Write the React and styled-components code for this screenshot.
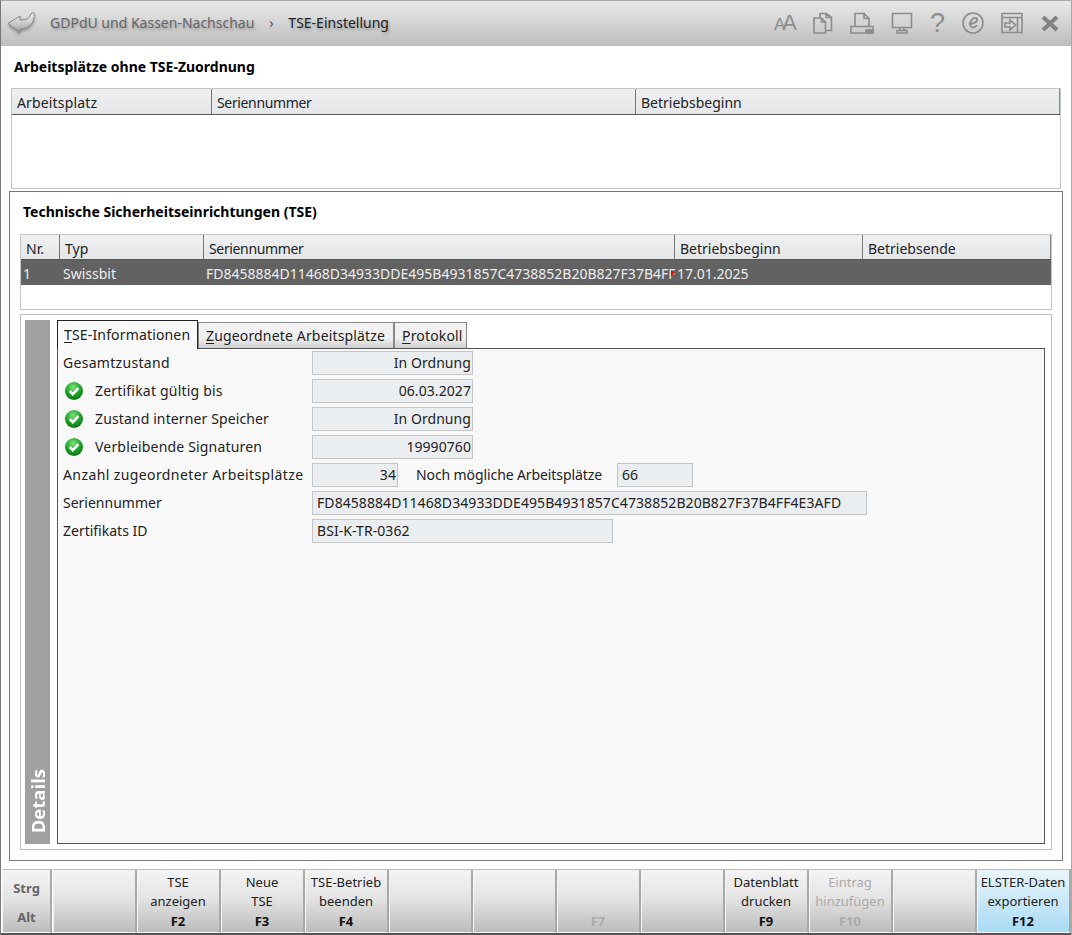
import React from 'react';
import styled, { createGlobalStyle, css } from 'styled-components';

const Global = createGlobalStyle`
  html, body { margin: 0; padding: 0; background: #fff; }
  * { box-sizing: border-box; }
  body { font-family: "Noto Sans", "Open Sans", "Liberation Sans", sans-serif; font-size: 14px; color: #1a1a1a; }
`;
const Window = styled.div`
  width: 1072px; height: 935px; display: flex; flex-direction: column; overflow: hidden;
  background: #fff; border-left: 1px solid #777; border-right: 1px solid #aaa; border-top: 1px solid #aaa;
`;
const Header = styled.header`
  flex: 0 0 45px; display: flex; align-items: center; padding: 0 11px 2px 6px;
  background: linear-gradient(#e8e8e8, #d8d8d8 40%, #bdbdbd);
`;
const Crumb = styled.span`
  font-size: 14px; color: ${p => p.$current ? '#222' : '#666'};
  text-shadow: 1px 2px 3px rgba(0,0,0,.3); white-space: nowrap;
`;
const Chevron = styled.span`
  width: 34px; text-align: center; font-size: 14px; color: #555;
`;
const BackIcon = styled.svg`
  width: 28px; height: 26px; margin-right: 15px; flex: none; filter: drop-shadow(0 2px 1.5px rgba(0,0,0,.3));
`;
const Tools = styled.div`
  margin-left: auto; display: flex; align-items: center; gap: 17px;
`;
const ToolIcon = styled.svg`
  width: ${p => p.$w || 22}px; height: 22px; display: block; flex: none; fill: none; stroke: #8c8c8c; stroke-width: 1.6;
`;
const AaGlyph = styled.span`
  width: 22px; display: flex; align-items: baseline; font-family: "Liberation Sans", sans-serif; font-size: 22px; letter-spacing: -3px; color: #8c8c8c; line-height: 22px; padding-top: 2px;
  small { font-size: 17px; }
`;
const Help = styled.span`
  width: 15px; text-align: center; font-family: "Liberation Sans", sans-serif; font-size: 27px; color: #8c8c8c; line-height: 22px;
`;
const Main = styled.main`
  flex: 1; min-height: 0; display: flex; flex-direction: column; padding: 0 8px 8px;
`;
const TopSection = styled.section`
  flex: 0 0 145px; padding: 0 2px;
`;
const Title = styled.h2`
  margin: 0; font-size: 14px; line-height: 20px; font-weight: 700; color: #000;
  padding: ${p => p.$inner ? '10px 3px 12px' : '11px 3px 11px'};
`;
const Table = styled.div`
  height: ${p => p.$h}px; border: 1px solid #c4c4c4; background: #fff;
`;
const HeadRow = styled.div`
  display: grid; grid-template-columns: ${p => p.$cols}; grid-template-rows: 100%; height: ${p => p.$h || 26}px;
  overflow: hidden;
  border-bottom: 1px solid #555;
  background: linear-gradient(#eef0f2, #e5e6e8);
`;
const HeadCell = styled.div`
  padding: 0 5px; line-height: 27px; font-size: 14px; color: #222; white-space: nowrap;
  letter-spacing: ${p => p.$ls || 0}px;
  border-right: 1px solid #777;
  &:last-child { border-right-color: #888; }
`;
const BodyRow = styled.div`
  display: grid; grid-template-columns: ${p => p.$cols}; grid-template-rows: 100%; height: 25px; background: #626262; color: #eee;
`;
const BodyCell = styled.div`
  position: relative; overflow: hidden; white-space: nowrap; padding: 0 2px 0 ${p => p.$pad || 2}px; line-height: 27px; font-size: 14px;
`;
const Overflow = styled.i`
  position: absolute; right: 0; top: 10px; width: 0; height: 0;
  border-left: 4px solid #f00; border-top: 3px solid transparent; border-bottom: 3px solid transparent;
`;
const Outer = styled.section`
  flex: 1; min-height: 0; display: flex; flex-direction: column; border: 1px solid #777; padding: 0 10px 10px;
`;
const Details = styled.div`
  flex: 1; min-height: 0; margin-top: 4px; border: 1px solid #bbb; padding: 5px 6px 5px 4px; display: flex; gap: 7px;
`;
const SideBar = styled.div`
  flex: 0 0 25px; background: #a0a0a0; display: flex; align-items: flex-end; justify-content: center; padding-bottom: 11px;
`;
const SideText = styled.span`
  writing-mode: vertical-rl; transform: rotate(180deg); color: #fff; font-weight: 700; font-size: 18.5px; line-height: 25px; font-family: "Open Sans", "Noto Sans", sans-serif;
`;
const TabArea = styled.div`
  flex: 1; min-width: 0; display: flex; flex-direction: column;
`;
const TabBar = styled.div`
  flex: 0 0 28px; display: flex; align-items: flex-end; position: relative; z-index: 1; margin-bottom: -1px; padding-bottom: 1px;
`;
const Tab = styled.div`
  width: ${p => p.$w}px; flex: none; height: 26px; line-height: 25px; padding-left: 7px; font-size: 14px; white-space: nowrap; color: #222;
  letter-spacing: .16px;
  border: 1px solid #888; border-bottom: 0;
  background: linear-gradient(#f2f2f2, #f0f0f0 60%, #cfcfcf);
  u { text-underline-offset: 2px; }
  ${p => p.$active && css`
    height: 29px; line-height: 27px; margin: 0 0 -1px 0; padding-left: 6px; border: 1px solid #222; border-bottom: 0; background: #f8f8f8;
  `}
`;
const Panel = styled.div`
  flex: 1; min-height: 0; background: #f8f8f8; border: 1px solid #555; padding: 2px 5px; display: flex; flex-direction: column; gap: 4px;
`;
const Row = styled.div`
  height: 24px; display: flex; align-items: center;
`;
const Label = styled.span`
  width: ${p => p.$w}px; flex: none; font-size: 14px; line-height: 24px; height: 24px; color: #222; white-space: nowrap;
  letter-spacing: ${p => p.$ls || 0}px;
  ${p => p.$after && css`margin-left: 18px; margin-right: 6px;`}
`;
const Check = styled.svg`
  width: 20px; height: 20px; margin: 0 11px 0 1px; flex: none;
`;
const Field = styled.div`
  width: ${p => p.$w}px; height: 24px; flex: none; background: #ebeef0; border: 1px solid #c4c4c4; font-size: 14px; line-height: 22px;
  color: #222; padding: 0 ${p => p.$right ? 1 : 4}px; text-align: ${p => p.$right ? 'right' : 'left'}; white-space: nowrap; overflow: hidden;
  letter-spacing: .07px;
`;
const Footer = styled.footer`
  flex: 0 0 66px; display: grid; grid-template-columns: 50px 1fr; padding-left: 1px;
  border-bottom: 2px solid #555;
`;
const Key = styled.div`
  display: grid; grid-template-rows: 19px 19px 20px; justify-items: center; align-items: center; padding: 3px 1px 0 0; text-align: center;
  font-size: 13px; line-height: 19px; white-space: nowrap;
  color: ${p => p.$off ? '#aaa' : '#222'};
  border: 1px solid #f4f4f4; border-right: 2px solid #a8a8a8; border-top: 1px solid #bbb;
  background: ${p => p.$hot ? 'linear-gradient(#eaf5fc, #a9dbf5)' : 'linear-gradient(#f4f4f4, #e4e4e4 45%, #bcbcbc)'};
`;
const KeyName = styled.b`
  grid-row: 3; font-size: 13px; color: ${p => p.$off ? '#aaa' : '#111'};
`;
const ModKey = styled(Key)`
  grid-template-rows: 1fr 1fr; padding: 4px 0 0; font-weight: 700; color: #666; font-size: 13px;
`;
const KeyRun = styled.div`
  display: grid; grid-template-columns: repeat(11, 84px) 1fr; margin-left: 1px;
`;

const cols1 = '200px 424px 1fr';
const cols2 = '39px 144px 471px 188px 1fr';
const serial = 'FD8458884D11468D34933DDE495B4931857C4738852B20B827F37B4FF4E3AFD';

const CheckIcon = () => (
  <Check viewBox="0 0 20 20">
    <defs>
      <radialGradient id="g" cx="45%" cy="30%" r="75%">
        <stop offset="0" stopColor="#7fe07a" />
        <stop offset=".55" stopColor="#1fa32a" />
        <stop offset="1" stopColor="#0a6a14" />
      </radialGradient>
    </defs>
    <circle cx="10" cy="10" r="9" fill="url(#g)" />
    <path d="M5.800 10.200l3 3 5.600-6" fill="none" stroke="#fff" strokeWidth="2.600" />
  </Check>
);

const keys = [
  {}, { a: 'TSE', b: 'anzeigen', k: 'F2' }, { a: 'Neue', b: 'TSE', k: 'F3' }, { a: 'TSE-Betrieb', b: 'beenden', k: 'F4' },
  {}, {}, { k: 'F7', off: true }, {}, { a: 'Datenblatt', b: 'drucken', k: 'F9' },
  { a: 'Eintrag', b: 'hinzufügen', k: 'F10', off: true }, {}, { a: 'ELSTER-Daten', b: 'exportieren', k: 'F12', hot: true },
];

export default function App() {
  return (
    <Window>
      <Global />
      <Header>
        <BackIcon viewBox="0 0 28 26">
          <defs>
            <linearGradient id="b" x1="0" y1="0" x2="0" y2="1">
              <stop offset="0" stopColor="#f4f4f4" /><stop offset="1" stopColor="#a2a2a2" />
            </linearGradient>
          </defs>
          <path d="M1 13.500L13 6v4c6 0 10-1.500 11.500-7H27c1.500 9.500-5 16-14 16v3.500z" fill="url(#b)" stroke="#858585" strokeWidth="1" strokeLinejoin="round" />
        </BackIcon>
        <Crumb>GDPdU und Kassen-Nachschau</Crumb>
        <Chevron>›</Chevron>
        <Crumb $current>TSE-Einstellung</Crumb>
        <Tools>
          <AaGlyph><small>A</small>A</AaGlyph>
          <ToolIcon $w={20} viewBox="0 0 20 22"><path d="M7 6V1.500h6v4h5.500v13H13M13 1.500l5.500 4M1 6h7.500l4 4v11H1zM8.500 6v4h4" /></ToolIcon>
          <ToolIcon $w={24} viewBox="0 0 24 22"><path d="M5 14V1.500h9l5 5V14M14 1.500v5h5M1 14.500h22v6.500H1z" /><path d="M16 18h7v3h-7z" fill="#8c8c8c" /></ToolIcon>
          <ToolIcon viewBox="0 0 22 22"><path d="M1.500 1.500h19v14h-19zM9 15.500v3M13 15.500v3M6 18.500h10v2.500H6z" /></ToolIcon>
          <Help>?</Help>
          <ToolIcon viewBox="0 0 22 22"><circle cx="11" cy="11" r="10" /><path d="M7 11.500c3.500.5 8.300-1 8.200-4-.1-2.200-3.600-2.300-5.500.3-1.900 2.700-2.500 6.300.2 7.300 1.800.6 3.700-.3 5-1.800" strokeWidth="1.800" /></ToolIcon>
          <ToolIcon viewBox="0 0 22 22"><path d="M1 1.500h20v19H1zM1 5.500h20M16.500 5.500v15M4 11h5V8l5.500 5-5.500 5v-3H4z" /></ToolIcon>
          <ToolIcon $w={20} viewBox="0 0 20 22"><path d="M3 5l14 13M17 5L3 18" strokeWidth="4.300" stroke="#828282" /></ToolIcon>
        </Tools>
      </Header>
      <Main>
        <TopSection>
          <Title>Arbeitsplätze ohne TSE-Zuordnung</Title>
          <Table $h={101}>
            <HeadRow $cols={cols1}>
              <HeadCell $ls={.15}>Arbeitsplatz</HeadCell>
              <HeadCell $ls={-.35}>Seriennummer</HeadCell>
              <HeadCell>Betriebsbeginn</HeadCell>
            </HeadRow>
          </Table>
        </TopSection>
        <Outer>
          <Title $inner>Technische Sicherheitseinrichtungen (TSE)</Title>
          <Table $h={76}>
            <HeadRow $cols={cols2} $h={25}>
              <HeadCell>Nr.</HeadCell>
              <HeadCell>Typ</HeadCell>
              <HeadCell $ls={-.35}>Seriennummer</HeadCell>
              <HeadCell>Betriebsbeginn</HeadCell>
              <HeadCell>Betriebsende</HeadCell>
            </HeadRow>
            <BodyRow $cols={cols2}>
              <BodyCell>1</BodyCell>
              <BodyCell $pad={3}>Swissbit</BodyCell>
              <BodyCell>{serial}<Overflow /></BodyCell>
              <BodyCell>17.01.2025</BodyCell>
              <BodyCell />
            </BodyRow>
          </Table>
          <Details>
            <SideBar><SideText>Details</SideText></SideBar>
            <TabArea>
              <TabBar>
                <Tab $active $w={141}><u>T</u>SE-Informationen</Tab>
                <Tab $w={196}><u>Z</u>ugeordnete Arbeitsplätze</Tab>
                <Tab $w={73}><u>P</u>rotokoll</Tab>
              </TabBar>
              <Panel>
                <Row><Label $w={249} $ls={.3}>Gesamtzustand</Label><Field $w={161} $right>In Ordnung</Field></Row>
                <Row><CheckIcon /><Label $w={217} $ls={.2}>Zertifikat gültig bis</Label><Field $w={161} $right>06.03.2027</Field></Row>
                <Row><CheckIcon /><Label $w={217} $ls={.12}>Zustand interner Speicher</Label><Field $w={161} $right>In Ordnung</Field></Row>
                <Row><CheckIcon /><Label $w={217} $ls={.18}>Verbleibende Signaturen</Label><Field $w={161} $right>19990760</Field></Row>
                <Row>
                  <Label $w={249} $ls={.4}>Anzahl zugeordneter Arbeitsplätze</Label>
                  <Field $w={86} $right>34</Field>
                  <Label $after $w={195} $ls={-.1}>Noch mögliche Arbeitsplätze</Label>
                  <Field $w={76}>66</Field>
                </Row>
                <Row><Label $w={249}>Seriennummer</Label><Field $w={555}>{serial}</Field></Row>
                <Row><Label $w={249}>Zertifikats ID</Label><Field $w={301}>BSI-K-TR-0362</Field></Row>
              </Panel>
            </TabArea>
          </Details>
        </Outer>
      </Main>
      <Footer>
        <ModKey><span>Strg</span><span>Alt</span></ModKey>
        <KeyRun>
          {keys.map((k, i) => (
            <Key key={i} $off={k.off} $hot={k.hot}>
              {k.a && <span>{k.a}</span>}
              {k.b && <span>{k.b}</span>}
              {k.k && <KeyName $off={k.off}>{k.k}</KeyName>}
            </Key>
          ))}
        </KeyRun>
      </Footer>
    </Window>
  );
}
